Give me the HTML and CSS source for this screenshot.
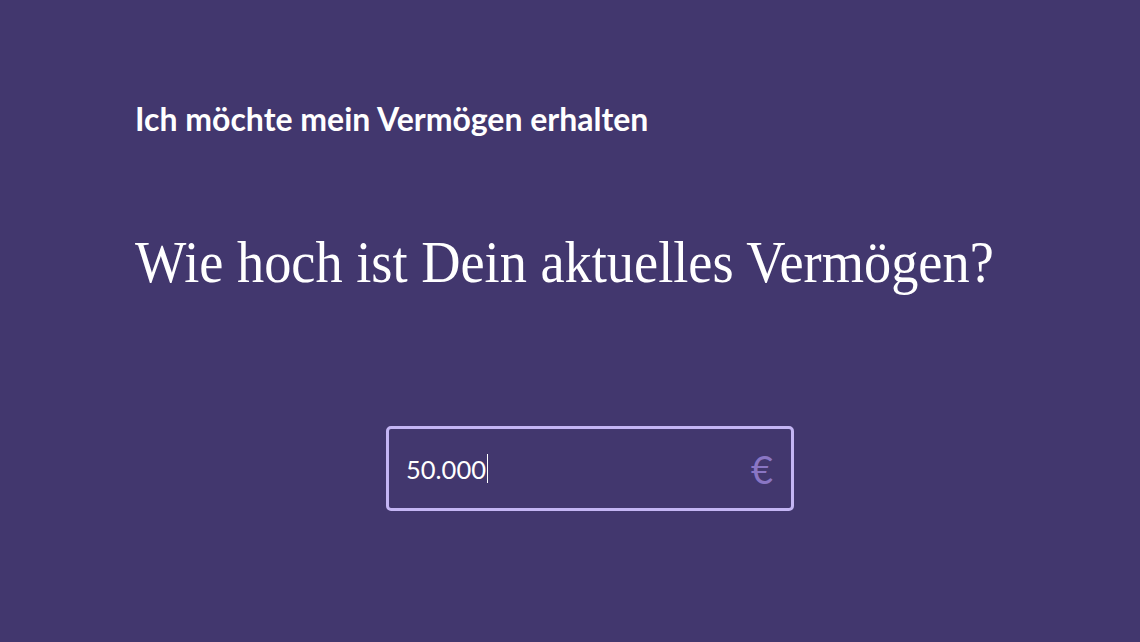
FILE: index.html
```html
<!DOCTYPE html>
<html lang="de">
<head>
<meta charset="utf-8">
<link rel="stylesheet" href="styles.css">
</head>
<body>
<main class="page">
  <p class="goal">Ich möchte mein Vermögen erhalten</p>
  <h1 class="question">Wie hoch ist Dein aktuelles Vermögen?</h1>
  <div class="field">
    <span class="value">50.000</span><span class="caret"></span>
    <span class="currency">€</span>
  </div>
</main>
</body>
</html>
```
FILE: styles.css
```css
html, body {
  margin: 0;
  padding: 0;
  height: 100%;
  background: #42376e;
}
.page {
  padding: 99px 0 0 135px;
  display: flex;
  flex-direction: column;
  align-items: flex-start;
}
.goal {
  margin: 0;
  font-family: Lato, "Liberation Sans", sans-serif;
  font-weight: 700;
  font-size: 32px;
  line-height: 40px;
  color: #ffffff;
}
.question {
  margin: 87px 0 0 0;
  font-family: "Liberation Serif", serif;
  font-weight: 400;
  font-size: 60px;
  line-height: 72px;
  color: #ffffff;
  white-space: nowrap;
  transform: scaleX(0.906);
  transform-origin: left center;
}
.field {
  margin: 128px 0 0 251px;
  box-sizing: border-box;
  width: 408px;
  height: 85px;
  border: 3px solid #c4b5f4;
  border-radius: 5px;
  display: flex;
  align-items: center;
  padding: 0 18px 0 17px;
}
.value {
  font-family: Lato, "Liberation Sans", sans-serif;
  font-size: 25.5px;
  color: #ffffff;
}
.caret {
  width: 1.5px;
  height: 29px;
  background: #ffffff;
  margin-left: 1px;
}
.currency {
  margin-left: auto;
  font-family: Lato, "Liberation Sans", sans-serif;
  font-size: 38px;
  color: #8a76c4;
}
```
